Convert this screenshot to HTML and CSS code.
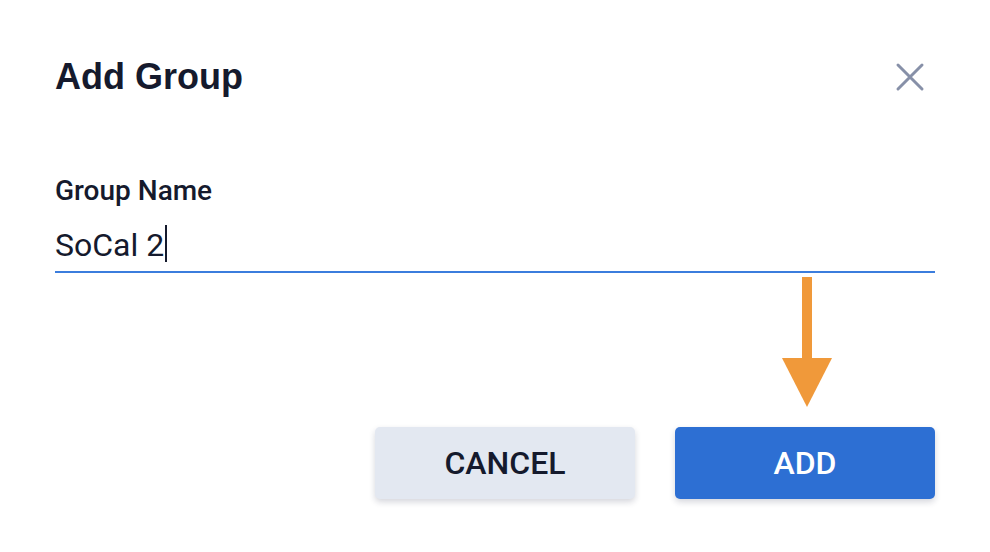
FILE: index.html
```html
<!DOCTYPE html>
<html>
<head>
<meta charset="utf-8">
<link rel="stylesheet" href="styles.css">
</head>
<body>
<div class="dialog">
  <header class="head">
    <h1 class="title">Add Group</h1>
    <button class="close" aria-label="Close">
      <svg width="30" height="30" viewBox="0 0 30 30"><path d="M3 3 L27 27 M27 3 L3 27" stroke="#8790a8" stroke-width="3" stroke-linecap="round"/></svg>
    </button>
  </header>
  <div class="field">
    <label class="label">Group Name</label>
    <div class="input"><span class="value">SoCal 2</span><span class="caret"></span></div>
  </div>
  <div class="arrow-row">
    <svg class="arrow" width="50" height="130" viewBox="0 0 50 130"><rect x="20" y="0" width="10" height="82" fill="#f0993a"/><polygon points="0,81 50,81 25,130" fill="#f0993a"/></svg>
  </div>
  <div class="actions">
    <button class="btn cancel">CANCEL</button>
    <button class="btn add">ADD</button>
  </div>
</div>
</body>
</html>
```
FILE: styles.css
```css
html, body { margin: 0; padding: 0; background: #fff; }
body { width: 990px; height: 552px; overflow: hidden; font-family: Roboto, "Liberation Sans", sans-serif; color: #151a2d; }
.dialog { padding: 0 55px; }
.head { display: flex; align-items: center; justify-content: space-between; height: 154px; }
.title { margin: 0; font-family: "Liberation Sans", Arial, sans-serif; font-weight: 700; font-size: 36px; color: #151a2d; }
.close { background: none; border: 0; padding: 0; margin-right: 10px; display: flex; }
.field { display: flex; flex-direction: column; margin-top: 20px; }
.label { font-size: 28px; font-weight: 500; line-height: 34px; height: 34px; }
.input { display: flex; align-items: flex-end; height: 57px; padding-bottom: 6px; border-bottom: 2px solid #3b7ddd; font-size: 32px; }
.value { line-height: 40px; }
.caret { width: 2px; height: 37px; background: #151a2d; margin-left: 1px; margin-bottom: 3px; }
.arrow-row { display: flex; justify-content: flex-end; padding-right: 103px; padding-top: 4px; height: 150px; }
.actions { display: flex; justify-content: flex-end; gap: 40px; }
.btn { width: 260px; height: 72px; border: 0; border-radius: 5px; font-family: Roboto, sans-serif; font-size: 32px; font-weight: 500; box-shadow: 0 3px 6px rgba(20, 30, 60, 0.18); }
.cancel { background: #e3e8f1; color: #151a2d; }
.add { background: #2d6fd3; color: #fff; }
```
